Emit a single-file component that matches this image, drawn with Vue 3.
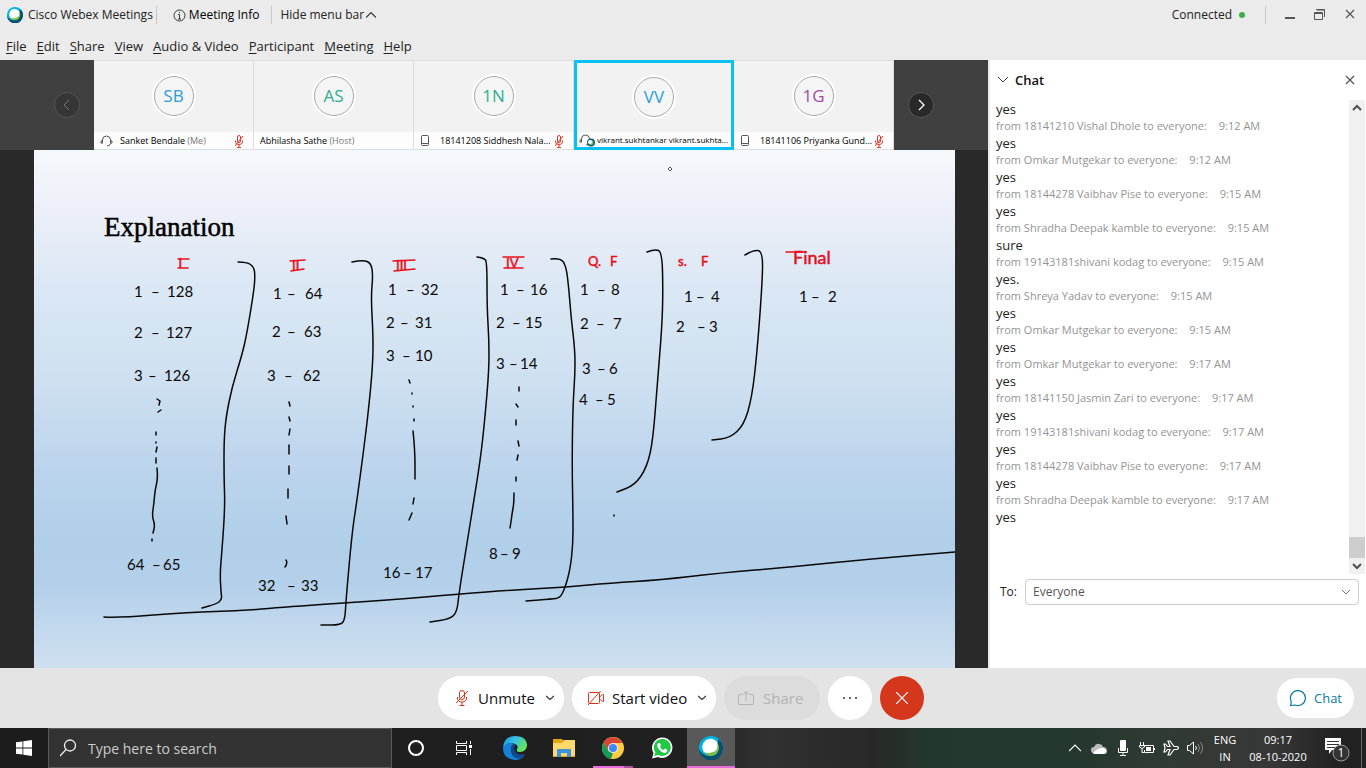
<script setup>
const menus = ['File', 'Edit', 'Share', 'View', 'Audio & Video', 'Participant', 'Meeting', 'Help']

const people = [
  { initials: 'SB', tone: 'blue', name: 'Sanket Bendale', role: '(Me)', device: 'headset', muted: true },
  { initials: 'AS', tone: 'green', name: 'Abhilasha Sathe', role: '(Host)', device: '', muted: false },
  { initials: '1N', tone: 'green', name: '18141208 Siddhesh Nala...', role: '', device: 'phone', muted: true },
  { initials: 'VV', tone: 'blue', name: 'vikrant.sukhtankar vikrant.sukhta...', role: '', device: 'headset', muted: false, active: true },
  { initials: '1G', tone: 'purple', name: '18141106 Priyanka Gund...', role: '', device: 'phone', muted: true }
]

const messages = [
  { text: 'yes', from: '18141210 Vishal Dhole', time: '9:12 AM' },
  { text: 'yes', from: 'Omkar Mutgekar', time: '9:12 AM' },
  { text: 'yes', from: '18144278 Vaibhav Pise', time: '9:15 AM' },
  { text: 'yes', from: 'Shradha Deepak kamble', time: '9:15 AM' },
  { text: 'sure', from: '19143181shivani kodag', time: '9:15 AM' },
  { text: 'yes.', from: 'Shreya Yadav', time: '9:15 AM' },
  { text: 'yes', from: 'Omkar Mutgekar', time: '9:15 AM' },
  { text: 'yes', from: 'Omkar Mutgekar', time: '9:17 AM' },
  { text: 'yes', from: '18141150 Jasmin Zari', time: '9:17 AM' },
  { text: 'yes', from: '19143181shivani kodag', time: '9:17 AM' },
  { text: 'yes', from: '18144278 Vaibhav Pise', time: '9:17 AM' },
  { text: 'yes', from: 'Shradha Deepak kamble', time: '9:17 AM' },
  { text: 'yes' }
]

// Handwritten pairings: baseline, then x and text of each part
const pairs = [
  [297, 134, '1', 151, 167, '128'], [338, 134, '2', 151, 166, '127'], [381, 134, '3', 148, 164, '126'],
  [570, 127, '64', 152, 163, '65'],
  [299, 273, '1', 287, 305, '64'], [337, 272, '2', 287, 304, '63'], [381, 267, '3', 284, 303, '62'],
  [591, 258, '32', 287, 301, '33'],
  [295, 388, '1', 406, 421, '32'], [328, 386, '2', 400, 415, '31'], [361, 386, '3', 402, 415, '10'],
  [578, 383, '16', 403, 415, '17'],
  [295, 500, '1', 516, 530, '16'], [328, 496, '2', 512, 525, '15'], [369, 496, '3', 509, 520, '14'],
  [559, 489, '8', 500, 512, '9'],
  [295, 580, '1', 597, 611, '8'], [329, 580, '2', 596, 613, '7'], [374, 582, '3', 597, 609, '6'],
  [405, 579, '4', 595, 607, '5'],
  [302, 684, '1', 696, 711, '4'], [332, 676, '2', 697, 709, '3'],
  [302, 799, '1', 811, 828, '2']
]

const heads = [
  { y: 268, parts: [[178.5, 'I']] },
  { y: 270, parts: [[292, 'II']] },
  { y: 270, parts: [[396, 'III']] },
  { y: 268, parts: [[506, 'IV']] },
  { y: 266, parts: [[588, 'Q.'], [610, 'F']] },
  { y: 266, parts: [[678, 's.'], [701, 'F']] },
  { y: 264, parts: [[793, 'Final']], large: true }
]

const redMarks = [
  'M178 259H189', 'M178 268H188', 'M290 261L305 260', 'M291 271L304 269',
  'M393 261L415 260', 'M394 271L415 269', 'M503 257H524', 'M504 268H523', 'M786 252H806'
]

const lines = [
  [[238, 262], [247, 262], [254, 267], [255, 276], [254, 290], [247, 333], [242, 355], [232, 387], [226, 417], [224, 440], [224, 477], [225, 507], [222, 550], [220, 573], [221, 592], [222, 600], [216, 604], [202, 608]],
  [[352, 262], [363, 260], [371, 263], [373, 275], [371, 297], [373, 333], [373, 360], [370, 396], [365, 440], [357, 500], [352, 533], [346, 600], [345, 619], [341, 625], [321, 625]],
  [[477, 257], [484, 258], [487, 262], [487, 307], [489, 340], [489, 370], [485, 417], [481, 455], [474, 500], [467, 543], [459, 593], [457, 612], [450, 619], [430, 622]],
  [[551, 259], [560, 258], [566, 265], [569, 290], [571, 317], [575, 350], [575, 375], [573, 403], [572, 460], [573, 515], [573, 545], [570, 570], [565, 588], [560, 598], [552, 599], [526, 601]],
  [[647, 252], [655, 249], [662, 252], [663, 290], [662, 327], [657, 387], [653, 440], [647, 467], [635, 485], [617, 492]],
  [[745, 255], [753, 250], [763, 251], [762, 287], [757, 353], [752, 397], [744, 425], [730, 438], [712, 440]],
  [[104, 617], [117, 618], [190, 612], [240, 611], [297, 606], [390, 600], [460, 594], [513, 590], [567, 587], [610, 583], [660, 580], [720, 573], [790, 567], [870, 559], [955, 552]],
  [[157, 468], [158, 478], [155, 490], [154, 503], [152, 516], [155, 525], [153, 533]],
  [[413, 431], [415, 450], [415, 479]],
  [[514, 493], [514, 503], [512, 514], [511, 522], [510, 528]]
]

const ticks =
  'M157 399l3 2-1 4M161 410l-3 2M156 432v3M156 442v1M157 447l-1 5M156 458v5M152 539v2' +
  'M289 402l1 4M289 417l1 4M290 429l-1 6M289 445v9M289 466v8M288 489v9M286 516l1 8M286 560q2 3-1 7' +
  'M409 380l1 3M412 393v1M413 406v1M414 419v2M414 498l-1 6M412 513l-3 7' +
  'M519 387v4M516 404l2 3M516 420v5M518 441l1 5M518 455l-1 5M516 477v4M614 515v1'

// Smooth a pen trail by running curves through segment midpoints
function smooth(points) {
  let d = `M${points[0][0]} ${points[0][1]}`
  for (let i = 1; i < points.length - 1; i++) {
    const [x, y] = points[i]
    const [nx, ny] = points[i + 1]
    d += `Q${x} ${y} ${(x + nx) / 2} ${(y + ny) / 2}`
  }
  const end = points[points.length - 1]
  return d + `L${end[0]} ${end[1]}`
}
</script>

<template>
  <div class="screen">
    <header>
      <div class="titlebar">
        <svg class="logo" width="16" height="16" viewBox="0 0 24 24">
          <circle cx="12" cy="12" r="12" fill="#00b4e4" /><path d="M24 12A12 12 0 0 1 0 13Q5 22 13 19Q20 15 19 3Q24 6 24 12Z" fill="#08506e" />
          <circle cx="12" cy="12" r="8" fill="#78be4b" /><path d="M5 16A8 8 0 0 1 18 6Q20 14 14 16Q8 18 5 16Z" fill="#fff" />
        </svg>
        <span class="app-name">Cisco Webex Meetings</span>
        <i class="rule"></i>
        <button class="plain info">
          <svg width="13" height="13" viewBox="0 0 13 13" fill="none" stroke="#333"><circle cx="6.5" cy="6.5" r="5.5" /><path d="M5 5.500h1.500V10M5 10h3M6 3.500h1" /></svg>
          Meeting Info
        </button>
        <i class="rule"></i>
        <button class="plain hide">
          Hide menu bar
          <svg width="10" height="8" viewBox="0 0 10 8" fill="none" stroke="#333" stroke-width="1.2"><path d="M0 6.500L5 1.500L10 6.500" /></svg>
        </button>
        <div class="window-tools">
          <span>Connected</span><i class="dot"></i><i class="rule"></i>
          <button class="plain" aria-label="Minimize"><svg width="12" height="14" viewBox="0 0 12 14"><path d="M1 10h10" stroke="#555" stroke-width="2" /></svg></button>
          <button class="plain" aria-label="Restore"><svg width="12" height="14" viewBox="0 0 12 14" fill="none" stroke="#555"><path d="M.5 4.500h8v7h-8zM.5 5.500h8M2.500 2V1.500h8V9M2.500 2h8" /></svg></button>
          <button class="plain" aria-label="Close window"><svg width="12" height="14" viewBox="0 0 12 14"><path d="M2 2l8 8M10 2l-8 8" stroke="#555" stroke-width="1.2" /></svg></button>
        </div>
      </div>
      <nav class="menubar">
        <button v-for="m in menus" :key="m" class="plain"><u>{{ m[0] }}</u>{{ m.slice(1) }}</button>
      </nav>
    </header>

    <main>
      <section class="meeting">
        <div class="strip">
          <div class="side left"><button class="arrow dim" aria-label="Previous"><svg width="24" height="24" viewBox="0 0 24 24" fill="none" stroke="#777"><path d="M14 7l-5 5 5 5" /></svg></button></div>
          <article v-for="p in people" :key="p.initials" class="tile" :class="{ active: p.active }">
            <div class="face"><span class="avatar" :class="p.tone">{{ p.initials }}</span></div>
            <div class="label">
              <svg v-if="p.device === 'headset'" class="device" width="16" height="14" viewBox="0 0 16 14" fill="none" stroke="#555">
                <path d="M2.500 9V6a4 4 0 0 1 8 0V9M2.500 6.500L1 7v2l1.500.5M10.500 6.500L12 7v2l-1.500.5Q10 12 7 12" />
                <g v-if="p.active" stroke="none"><circle cx="12" cy="9.500" r="4" fill="#08607f" /><circle cx="12" cy="9.500" r="2.500" fill="#78be4b" /><circle cx="11" cy="9" r="2" fill="#fff" /></g>
              </svg>
              <svg v-else-if="p.device === 'phone'" class="device" width="16" height="14" viewBox="0 0 16 14" fill="none" stroke="#555"><rect x="1.500" y="1.500" width="7" height="10" rx="1" /><path d="M2 9.500h6" /></svg>
              <span class="name">{{ p.name }} <em v-if="p.role">{{ p.role }}</em></span>
              <svg v-if="p.muted" class="muted" width="10" height="13" viewBox="0 0 10 13" fill="none" stroke="#e8382d"><rect x="3.500" y=".5" width="3" height="7" rx="1.500" /><path d="M1.500 5.500V7q0 2.500 3.500 2.500T8.500 7V5.500M5 9.500V12M3 12.500h4M9 1L1 11" /></svg>
            </div>
          </article>
          <div class="side right"><button class="arrow" aria-label="Next"><svg width="24" height="24" viewBox="0 0 24 24" fill="none" stroke="#fff" stroke-width="1.300"><path d="M10 7l5 5-5 5" /></svg></button></div>
        </div>

        <div class="stage">
          <svg class="slide" viewBox="34 150 921 518" preserveAspectRatio="none">
            <text class="slide-title" x="104" y="236">Explanation</text>
            <g class="ink red">
              <text v-for="(h, i) in heads" :key="i" :y="h.y" :class="{ large: h.large }"><tspan v-for="p in h.parts" :key="p[1]" :x="p[0]">{{ p[1] }}</tspan></text>
              <path v-for="d in redMarks" :key="d" :d="d" />
            </g>
            <g class="ink">
              <text v-for="(p, i) in pairs" :key="i" :y="p[0]"><tspan :x="p[1]">{{ p[2] }}</tspan><tspan :x="p[3]">–</tspan><tspan :x="p[4]">{{ p[5] }}</tspan></text>
              <path v-for="(l, i) in lines" :key="i" :d="smooth(l)" />
              <path :d="ticks" />
            </g>
            <path d="M670 167l2 2-2 2-2-2z" fill="#fff" stroke="#555" />
          </svg>
        </div>
      </section>

      <aside class="chat">
        <div class="chat-head">
          <svg width="12" height="8" viewBox="0 0 12 8" fill="none" stroke="#444"><path d="M1 1l5 5 5-5" /></svg>
          <h2>Chat</h2>
          <button class="plain" aria-label="Close chat"><svg width="10" height="10" viewBox="0 0 10 10"><path d="M1 1l8 8M9 1L1 9" stroke="#555" stroke-width="1.2" /></svg></button>
        </div>
        <div class="chat-body">
          <div class="log">
            <template v-for="(m, i) in messages" :key="i">
              <p class="msg">{{ m.text }}</p>
              <p v-if="m.from" class="from">from {{ m.from }} to everyone: <time>{{ m.time }}</time></p>
            </template>
          </div>
          <div class="scroll">
            <svg width="16" height="16" viewBox="0 0 16 16" fill="none" stroke="#505050" stroke-width="2"><path d="M4 10l4-4 4 4" /></svg>
            <i></i>
            <svg width="16" height="16" viewBox="0 0 16 16" fill="none" stroke="#505050" stroke-width="2"><path d="M4 6l4 4 4-4" /></svg>
          </div>
        </div>
        <div class="send">
          <label for="to">To:</label>
          <div class="pick">
            <select id="to"><option>Everyone</option></select>
            <svg width="10" height="6" viewBox="0 0 10 6" fill="none" stroke="#777"><path d="M1 1l4 4 4-4" /></svg>
          </div>
        </div>
      </aside>
    </main>

    <div class="controls">
      <div class="center">
        <button class="pill unmute">
          <svg width="14" height="18" viewBox="0 0 14 18" fill="none" stroke="#d4371c"><rect x="4.500" y="1.500" width="5" height="9" rx="2.500" /><path d="M2.500 8v1q0 4 4.500 4T11.500 9V8M7 13v3M4.500 16.500h5M13 2L1 14" /></svg>
          Unmute
          <svg class="more" width="8" height="6" viewBox="0 0 8 6" fill="none" stroke="#333" stroke-width="1.200"><path d="M0 1l4 3.500L8 1" /></svg>
        </button>
        <button class="pill video">
          <svg width="18" height="16" viewBox="0 0 18 16" fill="none" stroke="#d4371c"><rect x="1.500" y="2.500" width="11" height="11" rx="1" /><path d="M12.500 7l3-2.500h1v7h-1l-3-2.500M13.500 1L1 15" /></svg>
          Start video
          <svg class="more" width="8" height="6" viewBox="0 0 8 6" fill="none" stroke="#333" stroke-width="1.200"><path d="M0 1l4 3.500L8 1" /></svg>
        </button>
        <button class="pill share" disabled>
          <svg width="18" height="16" viewBox="0 0 18 16" fill="none" stroke="#b3b3b3"><path d="M5.500 4.500H3Q1.500 4.500 1.500 6v7q0 1.500 1.500 1.500h12q1.500 0 1.500-1.500V6q0-1.500-1.500-1.500h-2.500M9 11V1.500M6 4.500l3-3 3 3" /></svg>
          Share
        </button>
        <button class="round" aria-label="More options"><svg width="16" height="4" viewBox="0 0 16 4" fill="#333"><circle cx="2" cy="2" r="1" /><circle cx="8" cy="2" r="1" /><circle cx="14" cy="2" r="1" /></svg></button>
        <button class="round leave" aria-label="Leave meeting"><svg width="12" height="12" viewBox="0 0 12 12" stroke="#fff" stroke-width="1.200"><path d="M0 0l12 12M12 0L0 12" /></svg></button>
      </div>
      <button class="chat-toggle">
        <svg width="18" height="18" viewBox="0 0 18 18" fill="none" stroke="#0a7aa3" stroke-width="1.200"><path d="M2 12A7.500 7.500 0 1 1 6 16L1.500 16.500Q2.500 14 2 12Z" /></svg>
        Chat
      </button>
    </div>

    <footer class="taskbar">
      <button class="slot" aria-label="Start"><svg width="16" height="16" viewBox="0 0 16 16" fill="#fff"><path d="M0 2.300L6.500 1.400V7.600H0zM7.300 1.300L16 0V7.600H7.300zM0 8.400H6.500V14.600L0 13.700zM7.300 8.400H16V16L7.300 14.700z" /></svg></button>
      <label class="search">
        <svg width="16" height="18" viewBox="0 0 16 18" fill="none" stroke="#eee" stroke-width="1.300"><circle cx="10" cy="6.500" r="5.500" /><path d="M6 10.500L0 17" /></svg>
        <input type="text" placeholder="Type here to search" aria-label="Search" />
      </label>
      <button class="slot" aria-label="Cortana"><svg width="18" height="18" viewBox="0 0 18 18"><circle cx="9" cy="9" r="7" fill="none" stroke="#fff" stroke-width="2" /></svg></button>
      <button class="slot" aria-label="Task view"><svg width="18" height="16" viewBox="0 0 18 16" fill="none" stroke="#fff"><path d="M1.500 1v2.500h10V1M1.500 15v-2.500h10V15M1.500 5.500h10v5h-10zM15.500 1v3M15.500 9v6" /><path d="M14 5h3v3h-3z" fill="#fff" stroke="none" /></svg></button>
      <div class="apps">
        <button class="slot" aria-label="Edge">
          <svg width="24" height="24" viewBox="0 0 24 24">
            <defs>
              <linearGradient id="edgeTop" x1="0" y1="0" x2="1" y2=".5"><stop offset="0" stop-color="#1b91d6" /><stop offset=".5" stop-color="#35c3e8" /><stop offset="1" stop-color="#66e35a" /></linearGradient>
            </defs>
            <path d="M0 12Q1 0 12 0Q24 0 24 10Q23 16 16 16Q13 16 14 13Q16 9 12 8Q5 5 0 12Z" fill="url(#edgeTop)" />
            <path d="M0 12Q4 4 11 8Q8 9 8 14Q9 21 17 21Q20 21 22 19Q18 24 12 24Q0 23 0 12Z" fill="#1482d8" />
            <path d="M11 8Q7 11 8 16Q10 24 19 22L22 18Q15 20 12 15Q10 11 13 8.500Z" fill="#114a8b" />
          </svg>
        </button>
        <button class="slot" aria-label="File Explorer"><svg width="22" height="18" viewBox="0 0 22 18"><path d="M0 0h9l2 2h11v16H0z" fill="#e5a50d" /><path d="M0 4h9l2-3h11v16H0z" fill="#ffd76a" /><path d="M4 18V11q0-1 1-1h12q1 0 1 1v7h-4v-4H8v4z" fill="#3b94db" /></svg></button>
        <button class="slot chrome" aria-label="Chrome"><svg width="22" height="22" viewBox="0 0 22 22"><circle cx="11" cy="11" r="11" fill="#ffcd42" /><path d="M1.500 5.500A11 11 0 0 1 20.500 6H11L6 13Z" fill="#da4437" /><path d="M1.500 5.500L6.500 14L11 16L9 22Q0 20 0 11Q0 8 1.500 5.500Z" fill="#169b59" /><circle cx="11" cy="11" r="5" fill="#f2f2f2" /><circle cx="11" cy="11" r="4" fill="#4285f4" /></svg></button>
        <button class="slot" aria-label="WhatsApp"><svg width="22" height="22" viewBox="0 0 22 22"><path d="M1 21.500L2.500 16A10.200 10.200 0 1 1 7 20Z" fill="#fff" /><path d="M3 19L4.500 15.500A8.500 8.500 0 1 1 7.500 18Z" fill="#20c843" /><path d="M7.500 6Q5.500 7 6.500 10Q9 15 13.500 16Q16 16 16.500 13L14 11.500L12.500 13Q10 12 9 9.500L10 8.500L9 6Z" fill="#fff" /></svg></button>
        <button class="slot current" aria-label="Webex"><svg width="24" height="24" viewBox="0 0 24 24"><circle cx="12" cy="12" r="12" fill="#00b4e4" /><path d="M24 12A12 12 0 0 1 0 13Q5 22 13 19Q20 15 19 3Q24 6 24 12Z" fill="#08506e" /><circle cx="12" cy="12" r="8" fill="#78be4b" /><path d="M5 16A8 8 0 0 1 18 6Q20 14 14 16Q8 18 5 16Z" fill="#fff" /></svg></button>
      </div>
      <div class="tray">
        <button aria-label="Show hidden icons"><svg width="12" height="8" viewBox="0 0 12 8" fill="none" stroke="#fff" stroke-width="1.200"><path d="M0 7l6-6 6 6" /></svg></button>
        <button aria-label="OneDrive"><svg width="16" height="11" viewBox="0 0 16 11"><path d="M4 11Q0 10 0 7Q0 4 3 4Q5 0 8 1Q11 1 12 4Q16 4 16 8Q16 11 13 11Z" fill="#bbb" /><path d="M2 10.500Q5 6 9 5.500Q12 4 14 6Q16 8 15 10L13 11H4Z" fill="#fff" /></svg></button>
        <button aria-label="Microphone"><svg width="12" height="16" viewBox="0 0 12 16"><rect x="3" y="0" width="6" height="11" rx="1" fill="#fff" /><path d="M1.500 8v4.500h9V8M6 12.500V15M3 15.500h6" fill="none" stroke="#fff" /></svg></button>
        <button aria-label="Battery"><svg width="16" height="12" viewBox="0 0 16 12" fill="none" stroke="#fff"><path d="M5 3.500h9.500v7H5.500V8M15.500 6v2M1.500 0v3M4.500 0v3M.5 3.500h5V5L3 6.500L.5 5zM3 6.500v4h2" /><path d="M7 5h5v4H7z" fill="#fff" stroke="none" /></svg></button>
        <button aria-label="Airplane mode"><svg width="16" height="16" viewBox="0 0 16 16" fill="none" stroke="#fff" stroke-width="1.200"><path d="M1 4h1.500L4.500 6.500H7L5 1h2l4 5.500h3Q15.500 7 15.500 8T14 9.500h-3L7 15H5L7 9.500H4.500L2.500 12H1L2 8Z" /></svg></button>
        <button aria-label="Volume"><svg width="17" height="14" viewBox="0 0 17 14" fill="none" stroke="#fff"><path d="M.5 4.500h2L6.500 1v12L2.500 9.500h-2zM8.500 5q2 2 0 4" /><path d="M11 3q3 4 0 8M13.500 1q4 6 0 12" stroke="#888" /></svg></button>
        <button class="lang">ENG<br />IN</button>
        <button class="clock">09:17<br />08-10-2020</button>
        <button class="note" aria-label="Notifications"><svg width="28" height="28" viewBox="0 0 28 28"><path d="M2 4h16v12H9l-3 4v-4H2z" fill="#fff" /><path d="M4 7.500h12M4 10.500h12M4 13.500h8" stroke="#333" /><circle cx="18" cy="19" r="8" fill="#343434" stroke="#999" /><text x="18" y="23" text-anchor="middle">1</text></svg></button>
        <i class="desktop"></i>
      </div>
    </footer>
  </div>
</template>

<style>
body { margin: 0; }
</style>

<style scoped>
* { box-sizing: border-box; }
.screen { min-height: 100vh; display: flex; flex-direction: column; font: 12px/16px "Open Sans", "Noto Sans", sans-serif; color: #222; background: #ebebeb; }
button { font: inherit; color: inherit; border: 0; padding: 0; background: none; white-space: nowrap; }
svg { flex: none; }
header { height: 60px; }
.titlebar { height: 30px; display: flex; align-items: center; padding-left: 7px; }
.plain { display: flex; align-items: center; }
.app-name { margin: 0 3px 0 5px; }
.rule { width: 1px; height: 18px; background: #c8c8c8; }
.info { margin: 0 12px 0 16px; gap: 3px; color: #000; }
.hide { margin-left: 8px; gap: 2px; }
.window-tools { margin-left: auto; padding-right: 10px; display: flex; align-items: center; }
.window-tools > span { margin-right: 7px; }
.dot { width: 6px; height: 6px; border-radius: 50%; background: #3fae49; margin-right: 20px; }
.window-tools .plain { margin-left: 18px; }
.menubar { height: 30px; display: flex; gap: 10px; padding: 2px 0 0 6px; font-size: 13px; }
.menubar .plain { display: block; }
.menubar u { text-underline-offset: 2px; }
main { flex: 1; min-height: 0; display: grid; grid-template-columns: minmax(0, 1fr) 378px; }
.meeting { display: flex; flex-direction: column; }
.strip { height: 90px; display: flex; background: #404040; }
.side { flex: 1; display: flex; align-items: center; padding: 0 14px; }
.left { justify-content: flex-end; }
.arrow { width: 26px; height: 26px; border-radius: 50%; background: #292929; border: 1px solid #555; }
.arrow svg { display: block; }
.arrow.dim { background: #363636; }
.tile { width: 160px; display: flex; flex-direction: column; background: #f2f2f2; border: 1px solid #ddd; border-left-width: 0; }
.face { flex: 1; display: flex; align-items: center; justify-content: center; padding-bottom: 2px; }
.avatar { width: 40px; height: 40px; border-radius: 50%; border: 1px solid #aaa; box-shadow: 0 0 0 2px #fff; background: #f5f5f5; font-size: 17px; line-height: 38px; text-align: center; }
.blue { color: #2a9ddb; }
.green { color: #2fae92; }
.purple { color: #a04da6; }
.label { height: 17px; display: flex; align-items: center; padding: 1px 9px 0 6px; background: #fdfdfd; font-size: 9px; color: #000; }
.device { margin-right: 4px; }
.name { flex: 1; white-space: nowrap; }
.name em { font-style: normal; color: #777; }
.active { border: 3px solid #07c1f2; }
.active .label { height: 15px; padding: 0 0 0 2px; font-size: 8px; }
.active .device { margin-right: 2px; }
.stage { flex: 1; display: flex; background: #292929; padding: 0 33px 0 34px; }
.slide { width: 100%; height: 100%; background: linear-gradient(#f5f9fc 0, #eceff8 12%, #dde9f5 24%, #cddff0 46%, #bdd5ed 60%, #b0cfe9 76%, #b4d0ea 84%, #cfe0f0 100%); }
.slide-title { font: 27px "Liberation Serif", serif; fill: #000; stroke: #000; stroke-width: .5px; }
.ink { fill: none; stroke: #080808; stroke-width: 1.5px; stroke-linecap: round; stroke-linejoin: round; }
.ink text { font: 15px Lato, sans-serif; fill: #080808; stroke-width: 0; }
.ink.red { stroke: #e8101c; }
.ink.red text { font-size: 13px; fill: #e8101c; stroke-width: .5px; }
.ink.red .large { font-size: 18px; }
.chat { display: flex; flex-direction: column; background: #fff; border-left: 2px solid #ebebeb; }
.chat-head { height: 40px; display: flex; align-items: center; gap: 6px; padding: 0 11px 0 7px; }
.chat-head h2 { margin: 0; flex: 1; font-size: 13px; font-weight: 600; color: #111; }
.chat-body { flex: 1; display: flex; min-height: 0; }
.log { flex: 1; padding-left: 6px; }
.log p { margin: 0; white-space: nowrap; }
.msg { font-size: 13px; line-height: 18px; color: #222; }
.from { font-size: 11px; line-height: 16px; color: #949494; }
.from time { margin-left: 9px; }
.scroll { width: 16px; margin-right: 1px; background: #f0f0f0; display: flex; flex-direction: column; }
.scroll i { height: 21px; margin-top: auto; background: #cdcdcd; }
.send { height: 94px; display: flex; align-items: flex-start; padding: 5px 7px 0 10px; }
.send label { width: 25px; line-height: 26px; }
.pick { flex: 1; position: relative; }
.pick select { width: 100%; height: 26px; appearance: none; border: 1px solid #ccc; border-radius: 4px; background: #fff; padding: 0 7px; font: inherit; color: #555; }
.pick svg { position: absolute; right: 8px; top: 10px; }
.controls { height: 60px; background: #e4e4e4; display: grid; grid-template-columns: 1fr auto 1fr; align-items: center; padding: 0 12px 0 8px; }
.center { grid-column: 2; display: flex; gap: 8px; }
.pill { height: 44px; border-radius: 22px; background: #fff; display: flex; align-items: center; font-size: 15px; color: #111; gap: 8px; padding: 0 10px 0 14px; }
.more { margin-left: auto; }
.unmute { width: 126px; padding-left: 17px; gap: 9px; }
.video { width: 144px; padding-left: 15px; gap: 7px; }
.share { width: 96px; background: #dcdcdc; color: #b3b3b3; padding: 0 13px; }
.round { width: 44px; height: 44px; border-radius: 50%; background: #fff; display: grid; place-items: center; }
.leave { background: #d5371c; }
.chat-toggle { justify-self: end; width: 77px; height: 40px; border-radius: 20px; background: #fff; color: #0a7aa3; font-size: 13px; display: flex; align-items: center; justify-content: center; gap: 7px; }
.taskbar { height: 40px; display: flex; color: #fff; background: linear-gradient(90deg, #1c1c1c 0, #202020 50%, #313131 56%, #282828 64%, #23382d 68%, #25382e 79%, #303a34 85%, #373737 93%, #222 98%); }
.slot { width: 48px; height: 40px; display: grid; place-items: center; }
.search { flex: 0 1 344px; height: 40px; display: flex; align-items: center; gap: 12px; padding: 0 11px; background: #333; border: 1px solid #5a5a5a; }
.search input { flex: 1; min-width: 0; border: 0; padding: 0; background: none; font: 14px "Open Sans", sans-serif; color: #fff; outline: 0; }
.search input::placeholder { color: #ccc; opacity: 1; }
.apps { display: flex; gap: 1px; margin-left: 3px; }
.chrome { background: linear-gradient(90deg, #ea6bdd 0 31px, #a9529f 31px 40px) 4px 100% / 40px 2px no-repeat; }
.current { background: #595959; box-shadow: inset 0 -2px #ea6bdd; }
.tray { margin-left: auto; display: flex; align-items: center; }
.tray button { width: 24px; height: 40px; display: grid; place-items: center; }
.tray .lang, .tray .clock { display: block; width: 36px; font-size: 11px; line-height: 17px; text-align: center; }
.tray .clock { width: 70px; }
.tray .note { width: 48px; }
.note text { font: 12px "Open Sans", sans-serif; fill: #fff; }
.desktop { width: 5px; height: 40px; border-left: 1px solid #666; }
</style>
